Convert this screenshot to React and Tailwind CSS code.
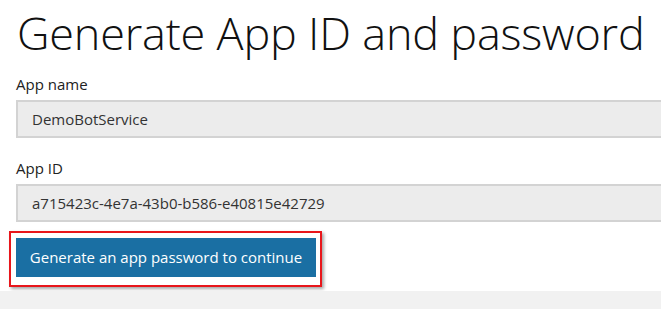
export default function App() {
  return (
    <div className="w-[661px] h-[309px] bg-white overflow-hidden flex flex-col font-['Segoe_UI','Open_Sans',sans-serif] text-[#222]">
      <div className="flex-1 pl-4">
        <h1 className="text-[45px] font-light leading-none pt-[10px] ml-[1px] tracking-[-0.2px] whitespace-nowrap text-[#111]">
          Generate App ID and password
        </h1>

        <div className="mt-[19px] text-[15px] leading-[20px]">App name</div>
        <div className="mt-[6px] h-[38px] w-[660px] bg-[#ececec] border-2 border-[#d3d3d3] flex items-center pl-[14px] text-[15px] text-[#333]">
          DemoBotService
        </div>

        <div className="mt-[20px] text-[15px] leading-[20px]">App ID</div>
        <div className="mt-[6px] h-[38px] w-[660px] bg-[#ececec] border-2 border-[#d3d3d3] flex items-center pl-[14px] text-[15px] text-[#333]">
          a715423c-4e7a-43b0-b586-e40815e42729
        </div>

        <div className="mt-[9px] -ml-[7px] w-[313px] h-[56px] border-2 border-[#e8161b] pl-[5px] pt-[5px] shadow-[2px_2px_3px_rgba(0,0,0,0.35)]">
          <button className="w-[300px] h-[39px] bg-[#1a6fa3] text-white text-[15px] flex items-center justify-center">
            Generate an app password to continue
          </button>
        </div>
      </div>
      <div className="h-[18px] bg-[#f1f1f1]" />
    </div>
  );
}
